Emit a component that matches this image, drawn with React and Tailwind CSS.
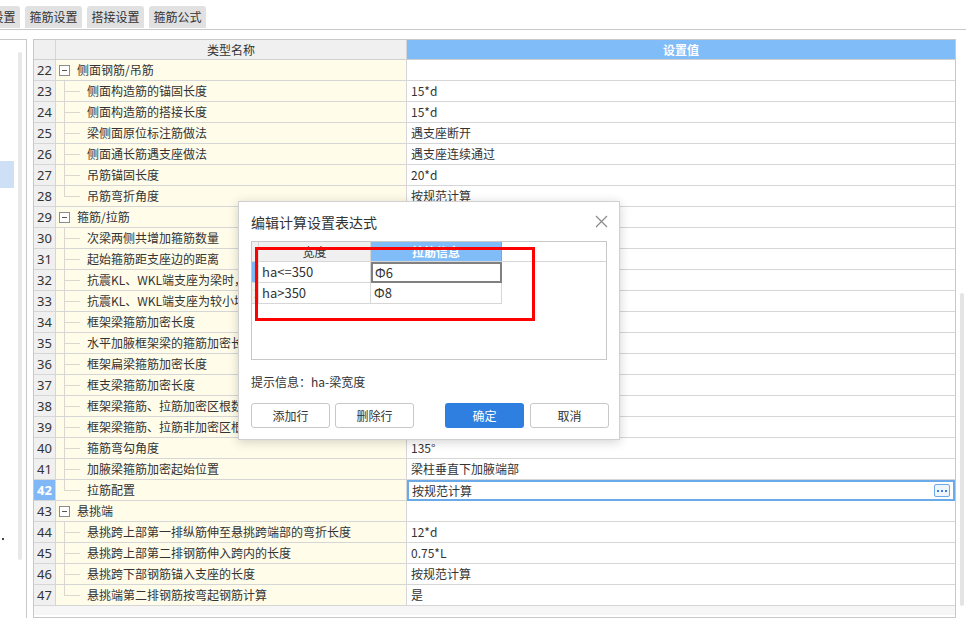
import React from 'react';

const rows = [
  { n: 22, kind: 'group', name: '侧面钢筋/吊筋', value: '' },
  { n: 23, kind: 'child', name: '侧面构造筋的锚固长度', value: '15*d' },
  { n: 24, kind: 'child', name: '侧面构造筋的搭接长度', value: '15*d' },
  { n: 25, kind: 'child', name: '梁侧面原位标注筋做法', value: '遇支座断开' },
  { n: 26, kind: 'child', name: '侧面通长筋遇支座做法', value: '遇支座连续通过' },
  { n: 27, kind: 'child', name: '吊筋锚固长度', value: '20*d' },
  { n: 28, kind: 'last', name: '吊筋弯折角度', value: '按规范计算' },
  { n: 29, kind: 'group', name: '箍筋/拉筋', value: '' },
  { n: 30, kind: 'child', name: '次梁两侧共增加箍筋数量', value: '6' },
  { n: 31, kind: 'child', name: '起始箍筋距支座边的距离', value: '50' },
  { n: 32, kind: 'child', name: '抗震KL、WKL端支座为梁时，则在该支座一侧箍筋加密', value: '否' },
  { n: 33, kind: 'child', name: '抗震KL、WKL端支座为较小墙肢时，则在该支座一侧箍筋加密', value: '否' },
  { n: 34, kind: 'child', name: '框架梁箍筋加密长度', value: 'max(2*h,500)' },
  { n: 35, kind: 'child', name: '水平加腋框架梁的箍筋加密长度', value: 'max(2*h,500)' },
  { n: 36, kind: 'child', name: '框架扁梁箍筋加密长度', value: 'max(b+2*h,lae+0.5*hc)' },
  { n: 37, kind: 'child', name: '框支梁箍筋加密长度', value: 'max(0.2*Ln,1.5*h)' },
  { n: 38, kind: 'child', name: '框架梁箍筋、拉筋加密区根数计算方式', value: '向上取整+1' },
  { n: 39, kind: 'child', name: '框架梁箍筋、拉筋非加密区根数计算方式', value: '向上取整-1' },
  { n: 40, kind: 'child', name: '箍筋弯勾角度', value: '135°' },
  { n: 41, kind: 'child', name: '加腋梁箍筋加密起始位置', value: '梁柱垂直下加腋端部' },
  { n: 42, kind: 'last', name: '拉筋配置', value: '按规范计算', selected: true },
  { n: 43, kind: 'group', name: '悬挑端', value: '' },
  { n: 44, kind: 'child', name: '悬挑跨上部第一排纵筋伸至悬挑跨端部的弯折长度', value: '12*d' },
  { n: 45, kind: 'child', name: '悬挑跨上部第二排钢筋伸入跨内的长度', value: '0.75*L' },
  { n: 46, kind: 'child', name: '悬挑跨下部钢筋锚入支座的长度', value: '按规范计算' },
  { n: 47, kind: 'last', name: '悬挑端第二排钢筋按弯起钢筋计算', value: '是' },
];

const tabs = ['计算设置', '箍筋设置', '搭接设置', '箍筋公式'];

function NameCell({ kind, name }) {
  if (kind === 'group') {
    return (
      <div className="flex h-full items-center pl-[3px]">
        <div className="flex h-[11px] w-[11px] items-center justify-center border border-[#8c8c8c] bg-white">
          <div className="h-px w-[5px] bg-[#555]" />
        </div>
        <span className="ml-[7px]">{name}</span>
      </div>
    );
  }
  return (
    <div className="flex h-full">
      <div className="ml-[8px] flex w-[16px] shrink-0 flex-col">
        <div className="flex-1 border-b border-l border-[#d8d8ce]" />
        <div className={kind === 'last' ? 'flex-1' : 'flex-1 border-l border-[#d8d8ce]'} />
      </div>
      <span className="ml-[7px] self-center">{name}</span>
    </div>
  );
}

function Row({ row }) {
  return (
    <div className="flex h-[21px] shrink-0 border-b border-[#d6d6d6]">
      <div
        className={
          row.selected
            ? 'flex w-[22px] shrink-0 items-center justify-center border-r border-[#d6d6d6] bg-[#80b8f5] font-["Noto_Sans",sans-serif] text-[13px] font-bold text-white'
            : 'flex w-[22px] shrink-0 items-center justify-center border-r border-[#d6d6d6] bg-[#f0f0f0] font-["Noto_Sans",sans-serif] text-[13px]'
        }
      >
        {row.n}
      </div>
      <div className="w-[351px] shrink-0 overflow-hidden whitespace-nowrap border-r border-[#d6d6d6] bg-[#fffcea]">
        <NameCell kind={row.kind} name={row.name} />
      </div>
      {row.selected ? (
        <div className="-mb-px flex min-w-0 flex-1 items-center justify-between border-2 border-[#6aaae8] bg-white pl-[3px] pr-[3px]">
          <span>{row.value}</span>
          <div className="flex h-[13px] w-[16px] items-center justify-center gap-[2px] rounded-[2px] border border-[#6aaae8] bg-[#eef5fd]">
            <div className="h-[2px] w-[2px] bg-[#3b82e0]" />
            <div className="h-[2px] w-[2px] bg-[#3b82e0]" />
            <div className="h-[2px] w-[2px] bg-[#3b82e0]" />
          </div>
        </div>
      ) : (
        <div className="flex min-w-0 flex-1 items-center overflow-hidden whitespace-nowrap bg-white pl-[4px]">{row.value}</div>
      )}
    </div>
  );
}

function Dialog() {
  return (
    <div className="absolute left-[238px] top-[201px] flex h-[239px] w-[382px] flex-col border border-[#d0d0d0] bg-white px-[12px] shadow-[0_2px_10px_rgba(0,0,0,0.18)]">
      {/* title */}
      <div className="flex h-[39px] shrink-0 items-center justify-between">
        <span className="text-[14px] text-[#333]">编辑计算设置表达式</span>
        <svg width="13" height="13" viewBox="0 0 13 13" className="mr-[-1px]">
          <path d="M1 1 L12 12 M12 1 L1 12" stroke="#8a8a8a" strokeWidth="1.2" />
        </svg>
      </div>

      {/* expression grid */}
      <div className="flex h-[119px] shrink-0 flex-col border border-[#c8c8c8] text-[13px]">
        <div className="flex h-[20px] shrink-0 border-b border-[#d6d6d6]">
          <div className="w-[7px] shrink-0 border-r border-[#d6d6d6] bg-[#f0f0f0]" />
          <div className="flex w-[112px] shrink-0 items-center justify-center border-r border-[#d6d6d6] bg-[#f0f0f0] text-[12px]">宽度</div>
          <div className="flex w-[131px] shrink-0 items-center justify-center border-r border-[#6aaae8] bg-[#80bcf8] text-[12px] font-bold text-white">拉筋信息</div>
        </div>
        <div className="flex h-[21px] shrink-0">
          <div className="w-[7px] shrink-0 border-b border-r border-[#d6d6d6] bg-[#80b8f5]" />
          <div className="flex w-[112px] shrink-0 items-center border-b border-r border-[#d6d6d6] pl-[3px]">ha&lt;=350</div>
          <div className="flex w-[131px] shrink-0 items-center border-2 border-[#808080] pl-[2px]">Ф6</div>
        </div>
        <div className="flex h-[21px] shrink-0">
          <div className="flex w-[7px] shrink-0 items-center justify-end overflow-hidden border-b border-r border-[#d6d6d6] bg-[#f0f0f0] text-[12px] leading-none">
            <span className="-mr-[3px]">2</span>
          </div>
          <div className="flex w-[112px] shrink-0 items-center border-b border-r border-[#d6d6d6] pl-[3px]">ha&gt;350</div>
          <div className="flex w-[131px] shrink-0 items-center border-b border-r border-[#d6d6d6] pl-[3px]">Ф8</div>
        </div>
      </div>

      <div className="mt-[14px] text-[12px] leading-[16px] text-[#333]">提示信息：ha-梁宽度</div>

      <div className="mt-[13px] flex justify-between text-[12px]">
        <div className="flex gap-[5px]">
          <button className="h-[25px] w-[79px] rounded-[3px] border border-[#c8c8c8] bg-white text-[#333]">添加行</button>
          <button className="h-[25px] w-[79px] rounded-[3px] border border-[#c8c8c8] bg-white text-[#333]">删除行</button>
        </div>
        <div className="-mr-[2px] flex gap-[6px]">
          <button className="h-[25px] w-[79px] rounded-[3px] bg-[#2e7fe0] text-white">确定</button>
          <button className="h-[25px] w-[79px] rounded-[3px] border border-[#c8c8c8] bg-white text-[#333]">取消</button>
        </div>
      </div>
    </div>
  );
}

export default function App() {
  return (
    <div className="relative h-[618px] w-[966px] overflow-hidden bg-white font-['Noto_Sans_CJK_SC','Noto_Sans',sans-serif] text-[12px] leading-[20px] text-[#333]">
      {/* tabs */}
      <div className="flex h-[30px] items-end gap-[5px] border-b border-[#c8c8c8]">
        {tabs.map((t, i) => (
          <div
            key={t}
            className={
              i === 0
                ? '-ml-[37px] mb-[1px] flex h-[22px] w-[57px] items-center justify-center rounded-t-[3px] bg-[#e1e1e1]'
                : 'mb-[1px] flex h-[22px] w-[57px] items-center justify-center rounded-t-[3px] bg-[#e1e1e1]'
            }
          >
            {t}
          </div>
        ))}
      </div>

      <div className="mt-[9px] flex">
        {/* left panel */}
        <div className="relative flex h-[579px] w-[27px] shrink-0 border-r border-t border-[#c8c8c8]">
          <div className="w-[14px] shrink-0">
            <div className="mt-[121px] h-[27px] bg-[#cde0f5]" />
          </div>
          <div className="ml-[4px] mt-[12px] h-[508px] w-[4px] rounded-full bg-[#e8e8e8]" />
          <div className="absolute left-[2px] top-[498px] h-[2px] w-[2px] bg-[#444]" />
        </div>

        {/* main grid */}
        <div className="ml-[6px] flex w-[923px] shrink-0 flex-col border border-[#c8c8c8]">
          <div className="flex h-[20px] shrink-0 border-b border-[#d0d0d0]">
            <div className="w-[22px] shrink-0 border-r border-[#d6d6d6] bg-[#f0f0f0]" />
            <div className="flex w-[351px] shrink-0 items-center justify-center border-r border-[#d6d6d6] bg-[#f0f0f0]">类型名称</div>
            <div className="flex flex-1 items-center justify-center bg-[#80bcf8] font-bold text-white">设置值</div>
          </div>
          {rows.map((r) => (
            <Row key={r.n} row={r} />
          ))}
          <div className="h-[9px] shrink-0 bg-[#f6f6f6]" />
        </div>

        {/* right scrollbar */}
        <div className="ml-[4px] mt-[254px] h-[313px] w-[4px] rounded-full bg-[#e4e4e4]" />
      </div>

      <Dialog />

      {/* red annotation box */}
      <div className="absolute left-[255px] top-[247px] h-[74px] w-[280px] border-[3px] border-[#ff0000]" />
    </div>
  );
}
